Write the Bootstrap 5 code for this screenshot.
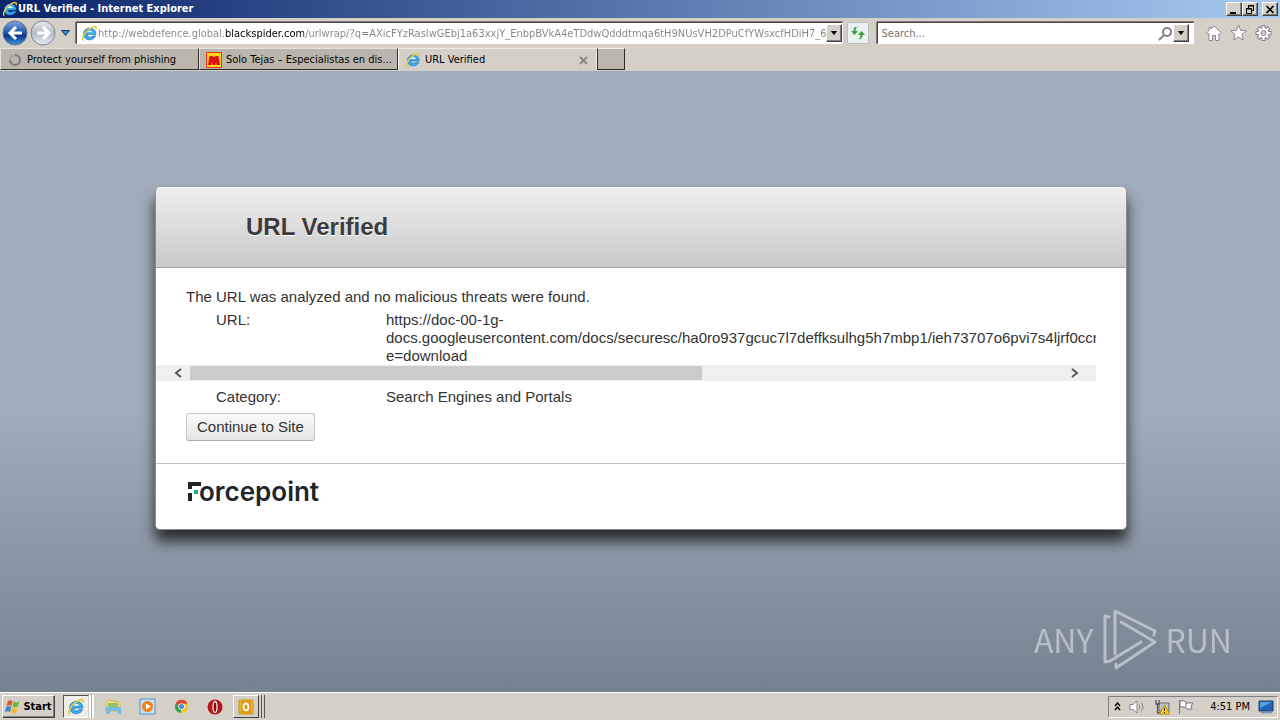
<!DOCTYPE html>
<html lang="en">
<head>
<meta charset="utf-8">
<meta name="viewport" content="width=device-width, initial-scale=1">
<title>URL Verified - Internet Explorer</title>
<link href="https://cdn.jsdelivr.net/npm/bootstrap@5.3.0/dist/css/bootstrap.min.css" rel="stylesheet">
<style>
:root { --face: #d4d0c8; --ui: "DejaVu Sans Condensed", "DejaVu Sans", sans-serif; }
body { font-family: var(--ui); font-size: 11px; line-height: 14px; color: #000; background: var(--face); overflow: hidden; }
button, input { font: inherit; color: inherit; }
svg { display: block; flex: none; }
.titlebar { height: 18px; background: linear-gradient(90deg, #0a246a, #a6caf0); color: #fff; padding: 0 2px; }
.titlebar h1 { font: bold 11px/18px "DejaVu Sans Condensed", sans-serif; }
.bevel { background: var(--face); border: 1px solid; border-color: #fff #404040 #404040 #fff; box-shadow: inset -1px -1px #808080; padding: 0; display: flex; align-items: center; justify-content: center; }
.win-btn { width: 16px; height: 14px; }
.address-row { height: 30px; padding: 0 8px 0 2px; }
.bare { border: 0; background: none; padding: 0; }
.field { height: 22px; background: #fff; border: 1px solid; border-color: #4a4440 #fff #fff #4a4440; box-shadow: 0 -1px #807c78, -1px 0 #807c78; }
.field input { border: 0; outline: 0; background: transparent; padding: 0; min-width: 0; height: 18px; }
.field .bevel { width: 16px; height: 18px; }
.field input.url { color: #858585; background: linear-gradient(90deg, #858585 127px, #000 127px 206px, #858585 206px); -webkit-background-clip: text; background-clip: text; -webkit-text-fill-color: transparent; }
.address-field { margin-left: 2px; }
.search-field { flex: 0 0 25%; width: 25%; }
.reload { width: 22px; height: 22px; background: #eceff0; border: 1px solid #b8bdc0; border-radius: 2px; padding: 2px; }
.tools { gap: 8px; margin-left: 12px; }
.tabs { height: 23px; }
.tab-item { height: 22px; width: 199px; background: #bab6ae; border: 1px solid; border-color: #e6e3dd #2b2b2b #2b2b2b #e6e3dd; padding: 2px 8px 0 6px; text-align: left; white-space: nowrap; }
.tab-item.current { background: var(--face); border-color: #efede8 #efede8 var(--face) #fff; }
.tab-new { width: 28px; height: 22px; background: #bab6ae; border: 1px solid #2b2b2b; border-top-color: #eee; }
.viewport { background: linear-gradient(#a0acba 0 55%, #76828f); padding: 116px 16px 0 18px; overflow: hidden; font-family: "Liberation Sans", Arial, sans-serif; font-size: 15px; line-height: 18px; color: #333; }
.notice { max-width: 972px; border: 0 solid #8b8f94; border-width: 0 1px 1px; border-radius: 5px; background: #fff; box-shadow: 0 11px 14px 0 rgba(0,0,0,.72); }
.notice-head { height: 81px; padding-left: 90px; background: linear-gradient(#efefef, #c9c9c9); border-bottom: 1px solid #a3a3a3; border-radius: 5px 5px 0 0; }
.notice-head h2 { font-size: 24px; line-height: 30px; font-weight: bold; color: #3b3b3b; text-shadow: 0 1px #fff; }
.notice-body { padding: 20px 30px 22px; }
.notice-body p { margin: 0 0 5px; }
.facts { margin: 0 0 7px -30px; }
.facts dt { width: 230px; padding-left: 60px; font-weight: normal; flex: none; }
.facts dd { margin: 0; overflow: hidden; white-space: nowrap; }
.hbar { height: 16px; background: #efefef; margin-bottom: 7px; padding: 0 14px; }
.hbar button { width: 16px; }
.thumb { width: 512px; height: 14px; background: #cbcbcb; margin-left: 4px; }
.go { height: 28px; padding: 0 10px; color: #333; background: linear-gradient(#fafafa, #e4e4e4); border: 1px solid #c8c8c8; border-bottom-color: #aaa; border-radius: 3px; }
.notice-foot { height: 66px; border-top: 1px solid #c4c4c4; padding: 17px 30px; }
.notice-foot svg { overflow: visible; }
.watermark { right: 48px; bottom: 20px; color: #c6cdd6; font: 400 32px/60px "Noto Sans CJK SC", sans-serif; gap: 8px; opacity: .8; }
.taskbar { height: 28px; border-top: 1px solid #fff; padding: 0 2px; }
.start { width: 53px; height: 23px; font-weight: bold; gap: 2px; }
.launch { width: 32px; height: 23px; margin-left: 2px; }
.launch.on { background: #efede8; border: 1px solid; border-color: #777 #fff #fff #777; }
.stack { box-shadow: 2px 0 var(--face), 3px 0 #555, 5px 0 var(--face), 6px 0 #555; width: 26px; }
.stack.on { box-shadow: 2px 0 #fff, 3px 0 #aaa, 5px 0 #fff; border-color: #555 #ccc #fff #555; }
.tray { height: 22px; border: 1px solid; border-color: #808080 #fff #fff #808080; padding: 0 3px 0 5px; }
</style>
</head>
<body class="d-flex flex-column vh-100">
<svg width="0" height="0" class="position-absolute" aria-hidden="true">
  <symbol id="ie" viewBox="0 0 16 16">
    <path d="M14.200 9H6c.2 2.700 3.700 3 4.900 1.200h3C12 15.800 2.300 15.300 2.300 8.500c0-7.300 12.100-7.700 11.900.5z" fill="#3aa9e8" stroke="#1673b8" stroke-width=".5"/>
    <path d="M6 6.900h4.700C10.300 4.900 6.500 4.800 6 6.900z" fill="#eef8ff"/>
    <path d="M2.500 14.500C-.5 14 3.500 5.500 10.500 2.200c3.500-1.700 4.600-.2 3.600 2" fill="none" stroke="#edc83a" stroke-width="1.400"/>
  </symbol>
  <symbol id="down" viewBox="0 0 8 5"><path d="M0 0h8L4 5z"/></symbol>
</svg>

<header>
  <div class="titlebar d-flex align-items-center">
    <svg width="16" height="16"><use href="#ie"/></svg>
    <h1 class="m-0 flex-grow-1">URL Verified - Internet Explorer</h1>
    <button class="bevel win-btn" aria-label="Minimize"><svg width="10" height="9"><path d="M1 7h6v2H1z"/></svg></button>
    <button class="bevel win-btn" aria-label="Restore"><svg width="10" height="9" fill="none" stroke="#000"><path d="M3.500 3V.5h5v5H7M3 1h6M1.500 3.500h5v5h-5zM1 4h6"/></svg></button>
    <button class="bevel win-btn ms-1" aria-label="Close"><svg width="10" height="9"><path d="M1.500 1l7 7m0-7l-7 7" stroke="#000" stroke-width="1.700"/></svg></button>
  </div>

  <div class="address-row d-flex align-items-center">
    <button class="bare" aria-label="Back"><svg width="27" height="26" viewBox="0 0 27 26"><defs><linearGradient id="blue" x2="0" y2="1"><stop stop-color="#7fa9df"/><stop offset=".5" stop-color="#1c51a8"/><stop offset=".6" stop-color="#0a3389"/><stop offset="1" stop-color="#3f9ae6"/></linearGradient></defs><circle cx="13" cy="13" r="12" fill="url(#blue)" stroke="#68727f"/><path d="M20 13H8m6-6l-6 6 6 6" fill="none" stroke="#fff" stroke-width="3"/></svg></button>
    <button class="bare" aria-label="Forward"><svg width="28" height="26" viewBox="0 0 28 26"><defs><linearGradient id="pale" x2="0" y2="1"><stop stop-color="#e9ecef"/><stop offset=".5" stop-color="#b4bdc8"/><stop offset="1" stop-color="#e6edf5"/></linearGradient></defs><circle cx="14" cy="13" r="12" fill="url(#pale)" stroke="#7c838c"/><path d="M8 13h12m-6-6l6 6-6 6" fill="none" stroke="#fff" stroke-width="3"/></svg></button>
    <button class="bare px-1" aria-label="Recent pages"><svg width="9" height="6" viewBox="0 0 9 6"><path d="M.5.5h8l-4 5z" fill="#2f8fd0" stroke="#123a6b"/></svg></button>
    <div class="field address-field d-flex align-items-center flex-grow-1">
      <svg width="17" height="17" class="ms-1"><use href="#ie"/></svg>
      <input class="url flex-grow-1" type="text" aria-label="Address" value="http://webdefence.global.blackspider.com/urlwrap/?q=AXicFYzRasIwGEbj1a63xxjY_EnbpBVkA4eTDdwQdddtmqa6tH9NUsVH2DPuCfYWsxcfHDiH7_6O_">
      <button class="bevel" aria-label="Show addresses"><svg width="8" height="4"><use href="#down"/></svg></button>
    </div>
    <button class="reload mx-1" aria-label="Refresh"><svg width="16" height="16" viewBox="0 0 16 16" fill="#35a23a"><path d="M8 2q-2.500 0-2.500 4H8L4.500 10 1 6h2.500Q3.500 1 8 2zM8 14q2.500 0 2.500-4H8l3.500-4L15 10h-2.500Q12.500 15 8 14z"/></svg></button>
    <div class="field search-field d-flex align-items-center ms-1">
      <input class="flex-grow-1 ms-1" type="text" placeholder="Search..." aria-label="Search">
      <svg width="15" height="15" viewBox="0 0 15 15" fill="none" stroke="#808080" stroke-width="2"><circle cx="9" cy="6" r="4"/><path d="M6 9l-5 5"/></svg>
      <button class="bevel me-1" aria-label="Search providers"><svg width="8" height="4"><use href="#down"/></svg></button>
    </div>
    <div class="tools d-flex">
      <button class="bare" aria-label="Home"><svg width="16" height="20" viewBox="0 0 16 18" fill="#fff" stroke="#8a8a8a"><path d="M8 2l7.500 7-1.500 1.500-1-1V16.500H9.500v-5h-3v5H3v-7l-1 1L.5 9 3 6.500V3.500h2v1.300z"/></svg></button>
      <button class="bare" aria-label="Favorites"><svg width="17" height="20" viewBox="0 0 17 18" fill="#fff" stroke="#8a8a8a"><path d="M8.500 1l2.100 5.300 5.700.4-4.400 3.700 1.400 5.600-4.800-3-4.800 3 1.400-5.600L.7 6.700l5.700-.4z"/></svg></button>
      <button class="bare" aria-label="Tools"><svg width="17" height="20" viewBox="0 0 17 18" fill="none"><g stroke="#858585" stroke-width="4"><path d="M8.500 1v16M.5 9h16M3 3.500l11 11m0-11l-11 11"/></g><circle cx="8.500" cy="9" r="6" fill="#858585"/><g stroke="#fff" stroke-width="2"><path d="M8.500 2v14M1.500 9h14M3.700 4.200l9.600 9.600m0-9.600l-9.600 9.600"/></g><circle cx="8.500" cy="9" r="5" fill="#fff"/><circle cx="8.500" cy="9" r="2.500" fill="#d4d0c8" stroke="#858585"/></svg></button>
    </div>
  </div>

  <nav class="tabs d-flex" aria-label="Tabs">
    <button class="tab-item d-flex align-items-center"><svg width="16" height="16" viewBox="0 0 16 16" fill="none" stroke-width="2"><circle cx="8" cy="8" r="5" stroke="#7c7a76"/><path d="M3 8a5 5 0 0 1 5-5" stroke="#b0ada6"/></svg><span class="ms-1">Protect yourself from phishing</span></button>
    <button class="tab-item d-flex align-items-center"><svg width="16" height="16" viewBox="0 0 16 16"><path fill="#ffd51c" stroke="#e9331e" d="M.5.500h15v15H.5z"/><path fill="#dc1010" d="M2 13l1.500-9H6l2 1 2-1h2.500L14 13h-3.500L10 10l-.5 3h-3L6 10l-.5 3z"/></svg><span class="ms-1">Solo Tejas – Especialistas en dis...</span></button>
    <button class="tab-item current d-flex align-items-center"><svg width="16" height="16"><use href="#ie"/></svg><span class="ms-1 flex-grow-1">URL Verified</span><svg width="9" height="9"><path d="M1 1l7 7m0-7L1 8" stroke="#8a8681" stroke-width="2"/></svg></button>
    <button class="tab-new" aria-label="New tab"></button>
  </nav>
</header>

<main class="viewport flex-grow-1 position-relative">
  <section class="notice mx-auto">
    <div class="notice-head d-flex align-items-center"><h2 class="m-0">URL Verified</h2></div>
    <div class="notice-body">
      <p>The URL was analyzed and no malicious threats were found.</p>
      <dl class="facts d-flex mb-0"><dt>URL:</dt><dd>https://doc-00-1g-<br>docs.googleusercontent.com/docs/securesc/ha0ro937gcuc7l7deffksulhg5h7mbp1/ieh73707o6pvi7s4ljrf0ccm<br>e=download</dd></dl>
      <div class="facts hbar d-flex align-items-center">
        <button class="bare" aria-label="Scroll left"><svg width="16" height="10" viewBox="0 0 16 10"><path d="M11 1L6 5l5 4" fill="none" stroke="#555" stroke-width="2"/></svg></button>
        <div class="thumb"></div>
        <button class="bare ms-auto" aria-label="Scroll right"><svg width="16" height="10" viewBox="0 0 16 10"><path d="M6 1l5 4-5 4" fill="none" stroke="#555" stroke-width="2"/></svg></button>
      </div>
      <dl class="facts d-flex"><dt>Category:</dt><dd>Search Engines and Portals</dd></dl>
      <button class="go d-block">Continue to Site</button>
    </div>
    <footer class="notice-foot">
      <svg width="140" height="32" viewBox="0 0 140 32" role="img" aria-label="Forcepoint"><path d="M2 1h13v4H6v3H2zM2 12h4v8H2z" fill="#1e252b"/><path d="M8 9h4v4H8z" fill="#20b298"/><text x="13" y="20" font-family="Inter, sans-serif" font-weight="600" font-size="26" fill="#1e252b">orcepoint</text></svg>
    </footer>
  </section>
  <div class="watermark position-absolute d-flex align-items-center">
    <span>ANY</span>
    <svg width="56" height="66" viewBox="0 0 56 66" fill="none" stroke="#c6cdd6" stroke-width="3" stroke-linejoin="round" stroke-linecap="round"><path d="M8 11L4 10v46l5-1 31-19M14 48V5l40 20-1 4M20 16l34 20L15 62v-4"/></svg>
    <span>RUN</span>
  </div>
</main>

<footer class="taskbar d-flex align-items-center">
  <button class="bevel start"><svg width="16" height="16" viewBox="0 0 16 16"><path d="M3 2q2-1.500 4.500 0L6.500 7Q4 5.500 1.500 7z" fill="#e4572b"/><path d="M8.500 2.500q3 1.500 6 0L13 7.500q-3 1.500-5.500 0z" fill="#74b73c"/><path d="M1.200 8q2.500-1.500 5 0L5 13q-2-1.500-5 0z" fill="#3685d0"/><path d="M7.200 8.500q3 1.500 5.500 0l-1.500 5q-3 1.500-5.500 0z" fill="#f2bd26"/></svg>Start</button>
  <button class="bevel launch stack on ms-2" aria-label="Internet Explorer"><svg width="18" height="18"><use href="#ie"/></svg></button>
  <button class="bare launch d-flex align-items-center justify-content-center ms-2" aria-label="Explorer"><svg width="17" height="16" viewBox="0 0 17 16"><path d="M1 3l3-2 3 1 8 1v9H1z" fill="#f5dc83" stroke="#d5b551"/><path d="M3 4h10v4H3z" fill="#8ac46b"/><path d="M1 8h15v7h-3v-3H5v3H1z" fill="#78bce3"/></svg></button>
  <button class="bare launch d-flex align-items-center justify-content-center" aria-label="Media Player"><svg width="17" height="17" viewBox="0 0 17 17"><path d="M1 1h15v15H1z" fill="#c9e0f3" stroke="#5791c5"/><circle cx="8.500" cy="8.500" r="5.500" fill="#f0821b"/><path d="M7 5.500l5 3-5 3z" fill="#fff"/></svg></button>
  <button class="bare launch d-flex align-items-center justify-content-center" aria-label="Chrome"><svg width="15" height="15" viewBox="0 0 16 16"><circle cx="8" cy="8" r="7" fill="#f5c623"/><path d="M8 8L2 4.500A7 7 0 0 0 7 15z" fill="#27a052"/><path d="M8 5h6.500A7 7 0 0 0 2 4.500L5 9z" fill="#df4434"/><circle cx="8" cy="8" r="3.500" fill="#fff"/><circle cx="8" cy="8" r="2.700" fill="#4484e4"/></svg></button>
  <button class="bare launch d-flex align-items-center justify-content-center" aria-label="Opera"><svg width="16" height="16" viewBox="0 0 16 16"><circle cx="8" cy="8" r="7.500" fill="#b3141c"/><ellipse cx="8" cy="8" rx="2" ry="5.500" fill="#7c0a10" stroke="#f6e3e3" stroke-width="1.300"/></svg></button>
  <button class="bevel launch stack" aria-label="Outlook"><svg width="16" height="16" viewBox="0 0 16 16"><path d="M1 1h14v14H1z" fill="#f1b82d" stroke="#d28f15"/><path d="M3 2h10v12H3z" fill="#dd960f"/><ellipse cx="8" cy="8" rx="2.500" ry="3.500" fill="none" stroke="#fff" stroke-width="1.800"/></svg></button>
  <div class="tray d-flex align-items-center ms-auto gap-2">
    <svg width="7" height="10" fill="none" stroke="#000" stroke-width="1.400"><path d="M1 4l2.500-3L6 4M1 8l2.500-3L6 8"/></svg>
    <svg width="17" height="16" viewBox="0 0 17 16" fill="#fff" stroke="#858585"><path d="M1 5.500h3L8 2v12l-4-3.500H1z"/><path d="M10 5.500q2 2.500 0 5M12 3.500q4 4.500 0 9" fill="none"/></svg>
    <svg width="16" height="16" viewBox="0 0 16 16"><path d="M5 4h10v8H5z" fill="#b9c6cd" stroke="#666"/><path d="M2 1v4h3V1M3.500 5v9H7" fill="none" stroke="#555" stroke-width="1.300"/><path d="M10.500 6l5 9h-10z" fill="#ffd529" stroke="#b48b00"/><path d="M10.500 9v3m0 1v1" stroke="#000"/></svg>
    <svg width="16" height="16" viewBox="0 0 16 16" fill="#fff" stroke="#777"><path d="M1.500 1v14M2 2q3-1.500 6 1v6Q5 7 2 8zM8 4h7l-2 3 1 3H8"/></svg>
    <time class="ms-2">4:51 PM</time>
    <svg width="16" height="14" viewBox="0 0 16 14"><path d="M1 1h14v10H1z" fill="#2365b5" stroke="#173f79"/><path d="M2 2h12L2 8z" fill="#5ba0e0"/><path d="M3 12h11v1.500H3z" fill="#7b9abc"/></svg>
  </div>
</footer>
<script src="https://cdn.jsdelivr.net/npm/bootstrap@5.3.0/dist/js/bootstrap.bundle.min.js"></script>
</body>
</html>
